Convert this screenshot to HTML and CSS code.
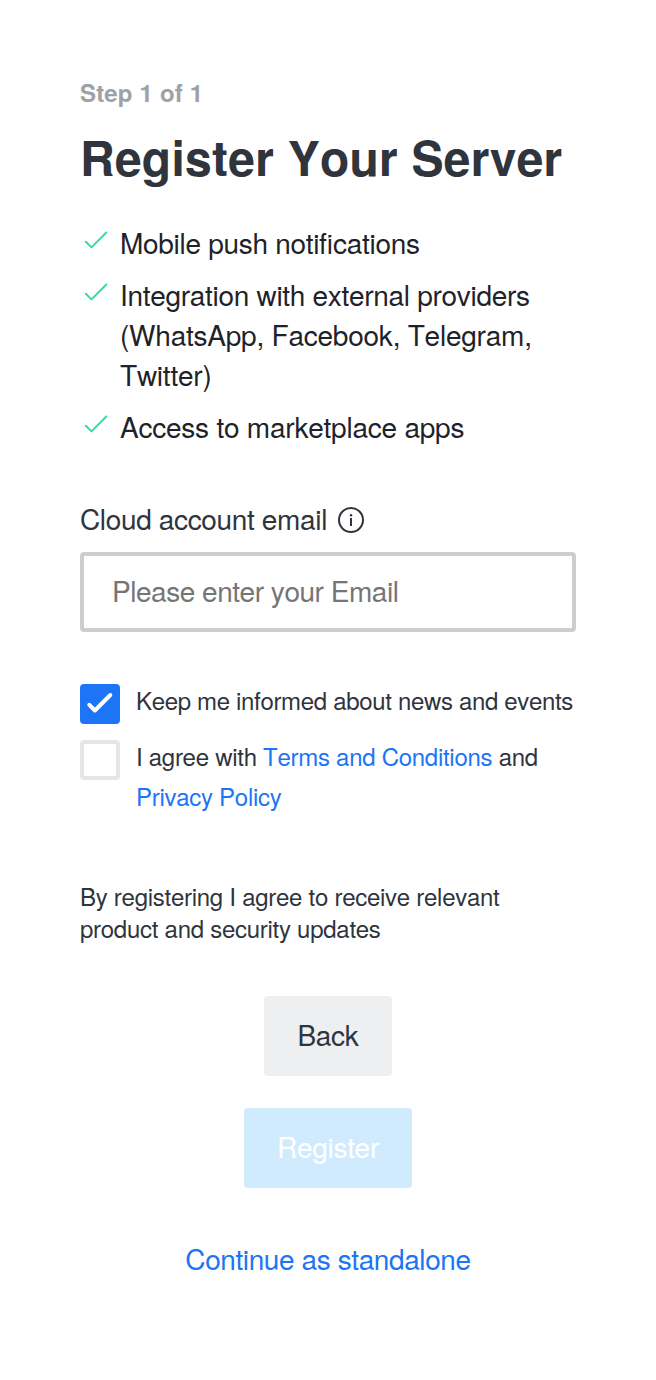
FILE: index.html
```html
<!DOCTYPE html>
<html lang="en">
<head>
<meta charset="utf-8">
<title>Register Your Server</title>
<link rel="stylesheet" href="styles.css">
</head>
<body>
<main class="form">
  <div class="step">Step 1 of 1</div>
  <h1 class="title">Register Your Server</h1>
  <ul class="benefits">
    <li class="benefit"><svg class="tick" viewBox="0 0 32 32"><path d="M5.8 17.7l5.7 5.7L26.3 8.5"/></svg><span>Mobile push noti<span class="ligature">fi</span>cations</span></li>
    <li class="benefit"><svg class="tick" viewBox="0 0 32 32"><path d="M5.8 17.7l5.7 5.7L26.3 8.5"/></svg><span>Integration with external providers <span class="apps">(WhatsApp, Facebook, Telegram, Twitter)</span></span></li>
    <li class="benefit"><svg class="tick" viewBox="0 0 32 32"><path d="M5.8 17.7l5.7 5.7L26.3 8.5"/></svg><span class="apps">Access to marketplace apps</span></li>
  </ul>
  <label class="label" for="email">Cloud account email
    <svg class="info" viewBox="0 0 32 32"><circle cx="16" cy="16" r="12"/><path d="M16 14v8"/><circle class="dot" cx="16" cy="11.2" r="1.2"/></svg>
  </label>
  <input class="input" id="email" type="email" placeholder="Please enter your Email">
  <div class="choice choice-news"><span class="box checked"><svg viewBox="0 0 40 40"><path d="M9.3 20.8l5.6 5.7L30.3 11"/></svg></span><span>Keep me informed about news and events</span></div>
  <div class="choice choice-terms"><span class="box"></span><span>I agree with <a href="#">Terms and Conditions</a> and <a href="#">Privacy Policy</a></span></div>
  <p class="notice">By registering I agree to receive relevant product and security updates</p>
  <div class="actions">
    <button class="button back">Back</button>
    <button class="button register" disabled>Register</button>
    <a class="standalone" href="#">Continue as standalone</a>
  </div>
</main>
</body>
</html>
```
FILE: styles.css
```css
* { box-sizing: border-box; }
body { margin: 0; background: #fff; color: #2f343d; font-family: "Nimbus Sans", "TeX Gyre Heros", "Liberation Sans", Arial, sans-serif; font-kerning: none; }
a { color: #1d74f5; text-decoration: none; }
.form { padding: 76px 80px 0; display: flex; flex-direction: column; }
.step { color: #9ea2a8; font-size: 24px; line-height: 32px; font-weight: 700; letter-spacing: 0.17px; }
.title { margin: 17px 0 0; font-size: 48px; line-height: 64px; font-weight: 700; letter-spacing: 0.25px; white-space: nowrap; }
.benefits { list-style: none; margin: 33px 0 0; padding: 0; display: flex; flex-direction: column; gap: 12px; color: #1f2329; font-size: 28px; line-height: 40px; letter-spacing: -0.3px; }
.benefit { display: flex; gap: 8px; }
.ligature { letter-spacing: 0; }
.apps { letter-spacing: -0.23px; }
.tick { width: 32px; height: 32px; flex: none; margin-top: 2px; fill: none; stroke: #2de0a5; stroke-width: 2; stroke-linecap: round; stroke-linejoin: round; }
.label { display: flex; align-items: center; gap: 8px; margin-top: 52px; font-size: 28px; line-height: 40px; letter-spacing: -0.35px; }
.info { width: 32px; height: 32px; margin-top: 4px; fill: none; stroke: #2f343d; stroke-width: 2; }
.info .dot { fill: #2f343d; stroke: none; }
.input { width: 100%; height: 80px; margin: 14px 0 0; padding: 0 28px 4px; border: 4px solid #cbced1; border-radius: 4px; background: #fff; color: #2f343d; font: inherit; font-size: 28px; letter-spacing: -0.47px; }
.input::placeholder { color: #757575; }
.choice { display: flex; gap: 16px; margin-top: 12px; font-size: 24px; line-height: 40px; letter-spacing: -0.33px; }
.choice-news { margin-top: 48px; }
.choice-terms { letter-spacing: -0.28px; }
.box { width: 40px; height: 40px; flex: none; margin-top: 4px; border: 4px solid #e4e7ea; border-radius: 4px; }
.checked { border: 0; background: #1d74f5; }
.checked svg { display: block; width: 40px; height: 40px; fill: none; stroke: #fff; stroke-width: 4; stroke-linecap: round; stroke-linejoin: round; }
.notice { margin: 64px 0 0; font-size: 24px; line-height: 32px; letter-spacing: -0.27px; }
.actions { display: flex; flex-direction: column; align-items: center; margin-top: 52px; }
.button { height: 80px; padding: 0 0 4px; border: 0; border-radius: 4px; font: inherit; font-size: 28px; letter-spacing: -0.3px; }
.back { width: 128px; background: #eeeff1; color: #2f343d; }
.register { width: 168px; margin-top: 32px; background: #d1ebfe; color: #fff; }
.standalone { margin-top: 50px; font-size: 28px; line-height: 40px; letter-spacing: -0.4px; }
```
